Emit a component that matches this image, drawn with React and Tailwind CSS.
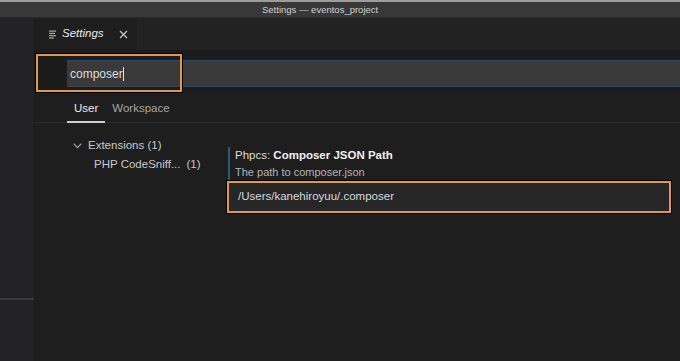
import React from "react";

const font = { fontFamily: '"Liberation Sans", Arial, sans-serif' };

function ListIcon() {
  return (
    <svg width="8" height="9" viewBox="0 0 8 9" className="shrink-0">
      <rect x="0" y="0.5" width="7" height="1.2" fill="#a8a8a8" />
      <rect x="0" y="2.8" width="6" height="1.2" fill="#a8a8a8" />
      <rect x="0" y="5.1" width="7" height="1.2" fill="#a8a8a8" />
      <rect x="0" y="7.4" width="5" height="1.2" fill="#a8a8a8" />
    </svg>
  );
}

function CloseIcon() {
  return (
    <svg width="9" height="9" viewBox="0 0 9 9">
      <path d="M1 1 L8 8 M8 1 L1 8" stroke="#c8c8c8" strokeWidth="1.2" />
    </svg>
  );
}

function Chevron() {
  return (
    <svg width="9" height="6" viewBox="0 0 9 6">
      <path d="M0.7 0.7 L4.5 4.7 L8.3 0.7" stroke="#a8a8a8" strokeWidth="1.1" fill="none" />
    </svg>
  );
}

export default function App() {
  return (
    <div className="w-[680px] h-[361px] overflow-hidden bg-[#1e1e1e] flex flex-col" style={font}>
      {/* cut-off menu bar */}
      <div className="h-[2px] bg-[#9c9c9c]" />

      {/* window title bar */}
      <div className="h-[16px] bg-[#383838] flex items-center pl-[262px] border-b border-[#2a2a2a]">
        <span className="text-[9.5px] text-[#cfcfcf] leading-none">Settings — eventos_project</span>
      </div>

      <div className="flex-1 flex">
        {/* activity bar / sidebar */}
        <div className="w-[35px] bg-[#232325] border-r border-[#1a1a1a] flex flex-col">
          <div className="h-[280px]" />
          <div className="h-[2px] bg-[#3a3a3c]" />
        </div>

        {/* editor */}
        <div className="flex-1 flex flex-col relative">
          {/* tab bar */}
          <div className="h-[32px] bg-[#222222] flex">
            <div className="w-[102px] bg-[#1e1e1e] flex items-center pl-[14px]">
              <ListIcon />
              <span className="ml-[5px] text-[11.5px] italic text-[#ececec]">Settings</span>
              <span className="ml-[15px] flex items-center"><CloseIcon /></span>
            </div>
          </div>

          {/* search header */}
          <div className="h-[42px] bg-[#1c1c1c] pt-[10px] pl-[32px]">
            <div className="h-[27px] bg-[#3a3a3a] border-y border-[#2f4660] flex items-center pl-[3px]">
              <span className="text-[12px] text-[#dcdcdc]">composer</span>
              <span className="w-[1px] h-[14px] bg-[#e0e0e0]" />
            </div>
          </div>

          {/* annotation around search */}
          <div className="absolute left-[1px] top-[36px] w-[146px] h-[38px] border-2 border-[#e5964e] ring-1 ring-black" />

          {/* User / Workspace tabs */}
          <div className="h-[31px] flex pl-[32px] border-b border-[#2c2c2c]">
            <div className="px-[7px] pt-[4px] flex items-center border-b-2 border-[#cfcfcf] -mb-[1px]">
              <span className="text-[11.5px] text-[#ececec]">User</span>
            </div>
            <div className="px-[7px] pt-[4px] flex items-center">
              <span className="text-[11.5px] text-[#a6a6a6]">Workspace</span>
            </div>
          </div>

          {/* content */}
          <div className="flex-1 flex">
            {/* TOC */}
            <div className="w-[193px] pl-[38px] pt-[13px] flex flex-col">
              <div className="h-[19px] flex items-center gap-[6px]">
                <Chevron />
                <span className="text-[11.5px] text-[#c8c8c8]">Extensions (1)</span>
              </div>
              <div className="h-[19px] flex items-center pl-[21px]">
                <span className="text-[11.5px] text-[#c8c8c8]">PHP CodeSniff...</span>
                <span className="ml-[6px] text-[11.5px] text-[#c8c8c8]">(1)</span>
              </div>
            </div>

            {/* setting */}
            <div className="flex-1 pt-[24px] pr-[9px]">
              <div className="border-l-2 border-[#2e5a78] flex flex-col">
                <div className="pl-[5px] h-[17px] flex items-center text-[11.5px] text-[#dcdcdc]">
                  <span>Phpcs:&nbsp;</span>
                  <span className="font-bold text-[#f0f0f0]">Composer JSON Path</span>
                </div>
                <div className="pl-[5px] h-[16px] flex items-center text-[11px] text-[#b4b4b4]">
                  The path to composer.json
                </div>
              </div>
              <div className="-ml-[1px] mt-[1px] h-[32px] border-2 border-[#e5964e] ring-1 ring-black bg-[#262626] flex items-center pl-[9px]">
                <span className="text-[11.5px] text-[#dadada]">/Users/kanehiroyuu/.composer</span>
              </div>
            </div>
          </div>
        </div>
      </div>
    </div>
  );
}
